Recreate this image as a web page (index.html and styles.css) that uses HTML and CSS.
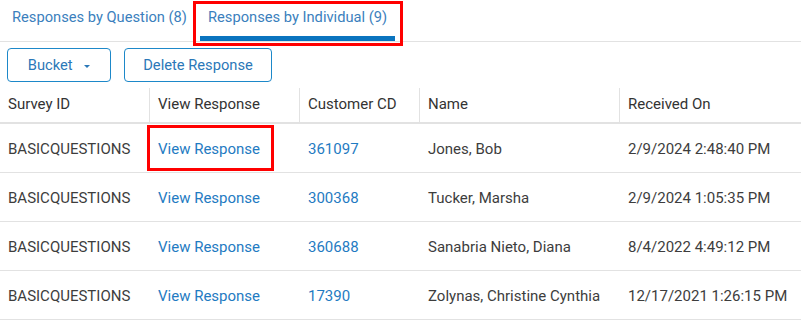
FILE: index.html
```html
<!DOCTYPE html>
<html lang="en">
<head>
  <meta charset="UTF-8">
  <meta name="viewport" content="width=device-width, initial-scale=1.0">
  <title>Survey Responses</title>
  <link rel="stylesheet" href="styles.css">
</head>
<body>
  <div class="tabs">
    <div class="tab">Responses by Question (8)</div>
    <div class="tab active marked">Responses by Individual (9)</div>
  </div>
  <div class="toolbar">
    <button class="btn btn-bucket">Bucket <span class="caret"></span></button>
    <button class="btn btn-delete">Delete Response</button>
  </div>
  <table class="responses">
    <thead>
      <tr>
        <th class="col-survey">Survey ID</th>
        <th class="col-view">View Response</th>
        <th class="col-cust">Customer CD</th>
        <th class="col-name">Name</th>
        <th>Received On</th>
      </tr>
    </thead>
    <tbody>
      <tr>
        <td>BASICQUESTIONS</td>
        <td><a href="#" class="link marked">View Response</a></td>
        <td><a href="#" class="link">361097</a></td>
        <td>Jones, Bob</td>
        <td>2/9/2024 2:48:40 PM</td>
      </tr>
      <tr>
        <td>BASICQUESTIONS</td>
        <td><a href="#" class="link">View Response</a></td>
        <td><a href="#" class="link">300368</a></td>
        <td>Tucker, Marsha</td>
        <td>2/9/2024 1:05:35 PM</td>
      </tr>
      <tr>
        <td>BASICQUESTIONS</td>
        <td><a href="#" class="link">View Response</a></td>
        <td><a href="#" class="link">360688</a></td>
        <td>Sanabria Nieto, Diana</td>
        <td>8/4/2022 4:49:12 PM</td>
      </tr>
      <tr>
        <td>BASICQUESTIONS</td>
        <td><a href="#" class="link">View Response</a></td>
        <td><a href="#" class="link">17390</a></td>
        <td>Zolynas, Christine Cynthia</td>
        <td>12/17/2021 1:26:15 PM</td>
      </tr>
    </tbody>
  </table>
</body>
</html>
```

FILE: styles.css
```css
body {
  font-family: Roboto, "Liberation Sans", sans-serif;
  font-size: 15px;
  color: #3d3d3d;
  margin: 0;
  background: #fff;
}
.tabs {
  display: flex;
  gap: 5px;
  padding-left: 4px;
  border-bottom: 1px solid #e2e2e2;
}
.tab {
  height: 41px;
  box-sizing: border-box;
  padding: 8px 8px 0;
  font-size: 14.7px;
  line-height: 18px;
  color: #3b7fbd;
  border-bottom: 5px solid transparent;
  cursor: pointer;
}
.tab.active {
  border-bottom-color: #0a74bf;
}
/* red annotation boxes */
.marked {
  position: relative;
}
.tab.marked::after {
  content: "";
  position: absolute;
  top: 1px;
  left: -7px;
  right: -8px;
  bottom: -10px;
  border: 3px solid #f00;
}
.link.marked::after {
  content: "";
  position: absolute;
  top: -15px;
  left: -11px;
  right: -14px;
  bottom: -13px;
  border: 3px solid #f00;
}
.toolbar {
  display: flex;
  gap: 13px;
  padding: 6px 0 0 7px;
  height: 34px;
}
.btn {
  font-family: inherit;
  font-size: 14.7px;
  color: #2b78b8;
  background: #fff;
  border: 1px solid #1d88c9;
  border-radius: 4px;
  height: 34px;
  padding: 0;
  cursor: pointer;
}
.btn-bucket { width: 104px; }
.btn-delete { width: 148px; }
.caret {
  display: inline-block;
  margin-left: 8px;
  vertical-align: middle;
  border-left: 3px solid transparent;
  border-right: 3px solid transparent;
  border-top: 3px solid #2b78b8;
}
.responses {
  width: 100%;
  border-collapse: collapse;
}
.responses th {
  height: 36px;
  padding: 4px 0 0 9px;
  text-align: left;
  font-weight: normal;
  color: #333;
  border-bottom: 2px solid #e2e2e2;
  background: linear-gradient(#e2e2e2, #e2e2e2) left 6px / 1px calc(100% - 6px) no-repeat;
}
.responses th:first-child {
  background: none;
  padding-left: 8px;
}
.col-survey { width: 141px; }
.col-view { width: 141px; }
.col-cust { width: 111px; }
.col-name { width: 191px; }
.responses td {
  height: 47px;
  padding: 1px 0 0 9px;
  border-bottom: 1px solid #e2e2e2;
  white-space: nowrap;
}
.responses td:first-child {
  padding-left: 8px;
}
.link {
  color: #1f7bc2;
  text-decoration: none;
}
```
